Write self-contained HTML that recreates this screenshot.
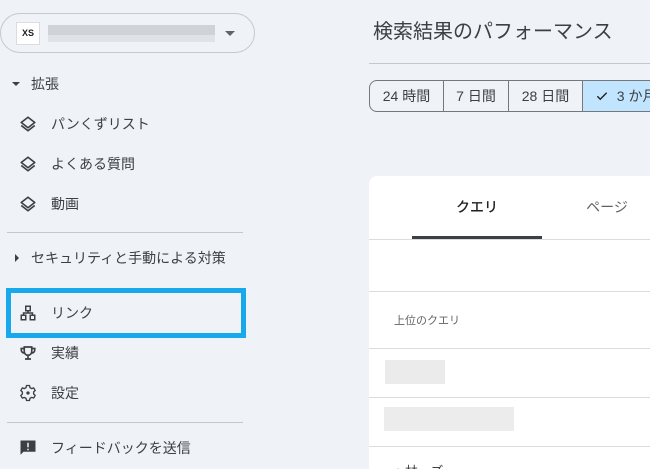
<!DOCTYPE html>
<html><head><meta charset="utf-8"><style>
*{box-sizing:border-box;margin:0;padding:0}
html,body{width:650px;height:469px;overflow:hidden}
body{background:#eff2f7;font-family:"Liberation Sans","Noto Sans CJK JP",sans-serif;color:#3c4043;position:relative}
.a{position:absolute}
.t{font-size:14px;color:#3c4043;white-space:nowrap;line-height:16px}
.ic{position:absolute;left:19px;width:18px;height:18px}
.blur{position:absolute;background:#d6d9de}
</style></head><body>
<div class="a" style="left:0;top:13px;width:255px;height:40px;border:1px solid #c6c9ce;border-radius:20px"></div>
<div class="a" style="left:16px;top:22px;width:24px;height:23px;background:#fff;border:1px solid #dadce0;font-size:9px;font-weight:bold;text-align:center;line-height:21px;color:#202124">XS</div>
<div class="blur" style="left:48px;top:25px;width:167px;height:10px;background:#cfd2d7"></div>
<div class="blur" style="left:48px;top:35px;width:167px;height:7px;background:#dfe2e6"></div>
<div class="a" style="left:225px;top:31px;border-left:5px solid transparent;border-right:5px solid transparent;border-top:5px solid #5f6368"></div>

<div class="a" style="left:12px;top:82px;border-left:4px solid transparent;border-right:4px solid transparent;border-top:4px solid #3c4043"></div>
<div class="a t" style="left:31px;top:76px">拡張</div>

<svg class="ic" style="top:115px" viewBox="0 0 24 24"><path d="M12 3 3 10l9 7 9-7z M3 14l9 7 9-7" fill="none" stroke="#3c4043" stroke-width="2.2" stroke-linejoin="round"/></svg>
<div class="a t" style="left:51px;top:116px">パンくずリスト</div>
<svg class="ic" style="top:155px" viewBox="0 0 24 24"><path d="M12 3 3 10l9 7 9-7z M3 14l9 7 9-7" fill="none" stroke="#3c4043" stroke-width="2.2" stroke-linejoin="round"/></svg>
<div class="a t" style="left:51px;top:156px">よくある質問</div>
<svg class="ic" style="top:195px" viewBox="0 0 24 24"><path d="M12 3 3 10l9 7 9-7z M3 14l9 7 9-7" fill="none" stroke="#3c4043" stroke-width="2.2" stroke-linejoin="round"/></svg>
<div class="a t" style="left:51px;top:196px">動画</div>

<div class="a" style="left:7px;top:232px;width:236px;height:1px;background:#c4c7cc"></div>
<div class="a" style="left:15px;top:254px;border-top:4px solid transparent;border-bottom:4px solid transparent;border-left:4px solid #3c4043"></div>
<div class="a t" style="left:31px;top:250px">セキュリティと手動による対策</div>

<div class="a" style="left:6px;top:288px;width:240px;height:50px;border:5px solid #17a9ec"></div>
<svg class="ic" style="top:304px" viewBox="0 0 24 24"><path d="M9 3h6v6H9z M3 15h6v6H3z M15 15h6v6h-6z M12 9v3 M6 15v-3h12v3" fill="none" stroke="#3c4043" stroke-width="2"/></svg>
<div class="a t" style="left:51px;top:305px">リンク</div>
<svg class="ic" style="top:344px" viewBox="0 0 24 24"><path d="M7 4h10v6a5 5 0 0 1-10 0z M7 6H3v2a4 4 0 0 0 4 4 M17 6h4v2a4 4 0 0 1-4 4 M12 15v4 M8 20h8" fill="none" stroke="#3c4043" stroke-width="2.2"/></svg>
<div class="a t" style="left:51px;top:345px">実績</div>
<svg class="ic" style="top:384px" viewBox="0 0 24 24"><path d="M10 2h4l.6 2.8 2.3 1.3 2.7-.9 2 3.5-2.1 1.9v2.7l2.1 1.9-2 3.5-2.7-.9-2.3 1.3L14 22h-4l-.6-2.8-2.3-1.3-2.7.9-2-3.5 2.1-1.9V10.7L2.4 8.7l2-3.5 2.7.9 2.3-1.3z" fill="none" stroke="#3c4043" stroke-width="1.8" stroke-linejoin="round"/><circle cx="12" cy="12" r="2.2" fill="#3c4043"/></svg>
<div class="a t" style="left:51px;top:385px">設定</div>

<div class="a" style="left:7px;top:422px;width:236px;height:1px;background:#c4c7cc"></div>
<svg class="ic" style="top:439px" viewBox="0 0 24 24"><path d="M2 2h20v15H6l-4 4z" fill="#3c4043"/><path d="M11 5h2v6h-2z M11 13h2v2h-2z" fill="#eff2f7"/></svg>
<div class="a t" style="left:51px;top:440px">フィードバックを送信</div>

<div class="a" style="left:373px;top:20px;font-size:20px;color:#3c4043;white-space:nowrap;line-height:24px">検索結果のパフォーマンス</div>
<div class="a" style="left:369px;top:63px;width:281px;height:1px;background:#c4c7cc"></div>

<div class="a" style="left:369px;top:80px;width:300px;height:32px;border:1px solid #74777c;border-radius:8px 0 0 8px;overflow:hidden;display:flex;font-size:14px;color:#3c4043;line-height:30px;white-space:nowrap">
<div style="width:74px;text-align:center;border-right:1px solid #74777c">24 時間</div>
<div style="width:65px;text-align:center;border-right:1px solid #74777c">7 日間</div>
<div style="width:74px;text-align:center;border-right:1px solid #74777c">28 日間</div>
<div style="flex:1;background:#c2e5ff;padding-left:12px"><svg width="14" height="14" viewBox="0 0 24 24" style="vertical-align:-2px"><path d="M4 12.5l5 5L20 6.5" fill="none" stroke="#202124" stroke-width="2.4"/></svg>&nbsp; 3 か月</div>
</div>

<div class="a" style="left:369px;top:176px;width:290px;height:300px;background:#fff;border-radius:8px 0 0 0"></div>
<div class="a" style="left:412px;top:197px;width:130px;text-align:center;font-size:14px;color:#202124;font-weight:500">クエリ</div>
<div class="a" style="left:412px;top:236px;width:130px;height:3px;background:#3c4043"></div>
<div class="a" style="left:580px;top:197px;width:54px;text-align:center;font-size:14px;color:#5f6368">ページ</div>
<div class="a" style="left:369px;top:239px;width:281px;height:1px;background:#dadce0"></div>
<div class="a" style="left:369px;top:291px;width:281px;height:1px;background:#dadce0"></div>
<div class="a" style="left:394px;top:312px;font-size:11px;color:#5f6368">上位のクエリ</div>
<div class="a" style="left:369px;top:348px;width:281px;height:1px;background:#dadce0"></div>
<div class="blur" style="left:385px;top:360px;width:60px;height:24px;background:#ebebeb"></div>
<div class="a" style="left:369px;top:397px;width:281px;height:1px;background:#dadce0"></div>
<div class="blur" style="left:384px;top:407px;width:130px;height:24px;background:#ececec"></div>
<div class="a" style="left:369px;top:446px;width:281px;height:1px;background:#dadce0"></div>
<div class="a" style="left:392px;top:461px;font-size:13px;color:#3c4043">ッ林ーズ</div>
</body></html>
